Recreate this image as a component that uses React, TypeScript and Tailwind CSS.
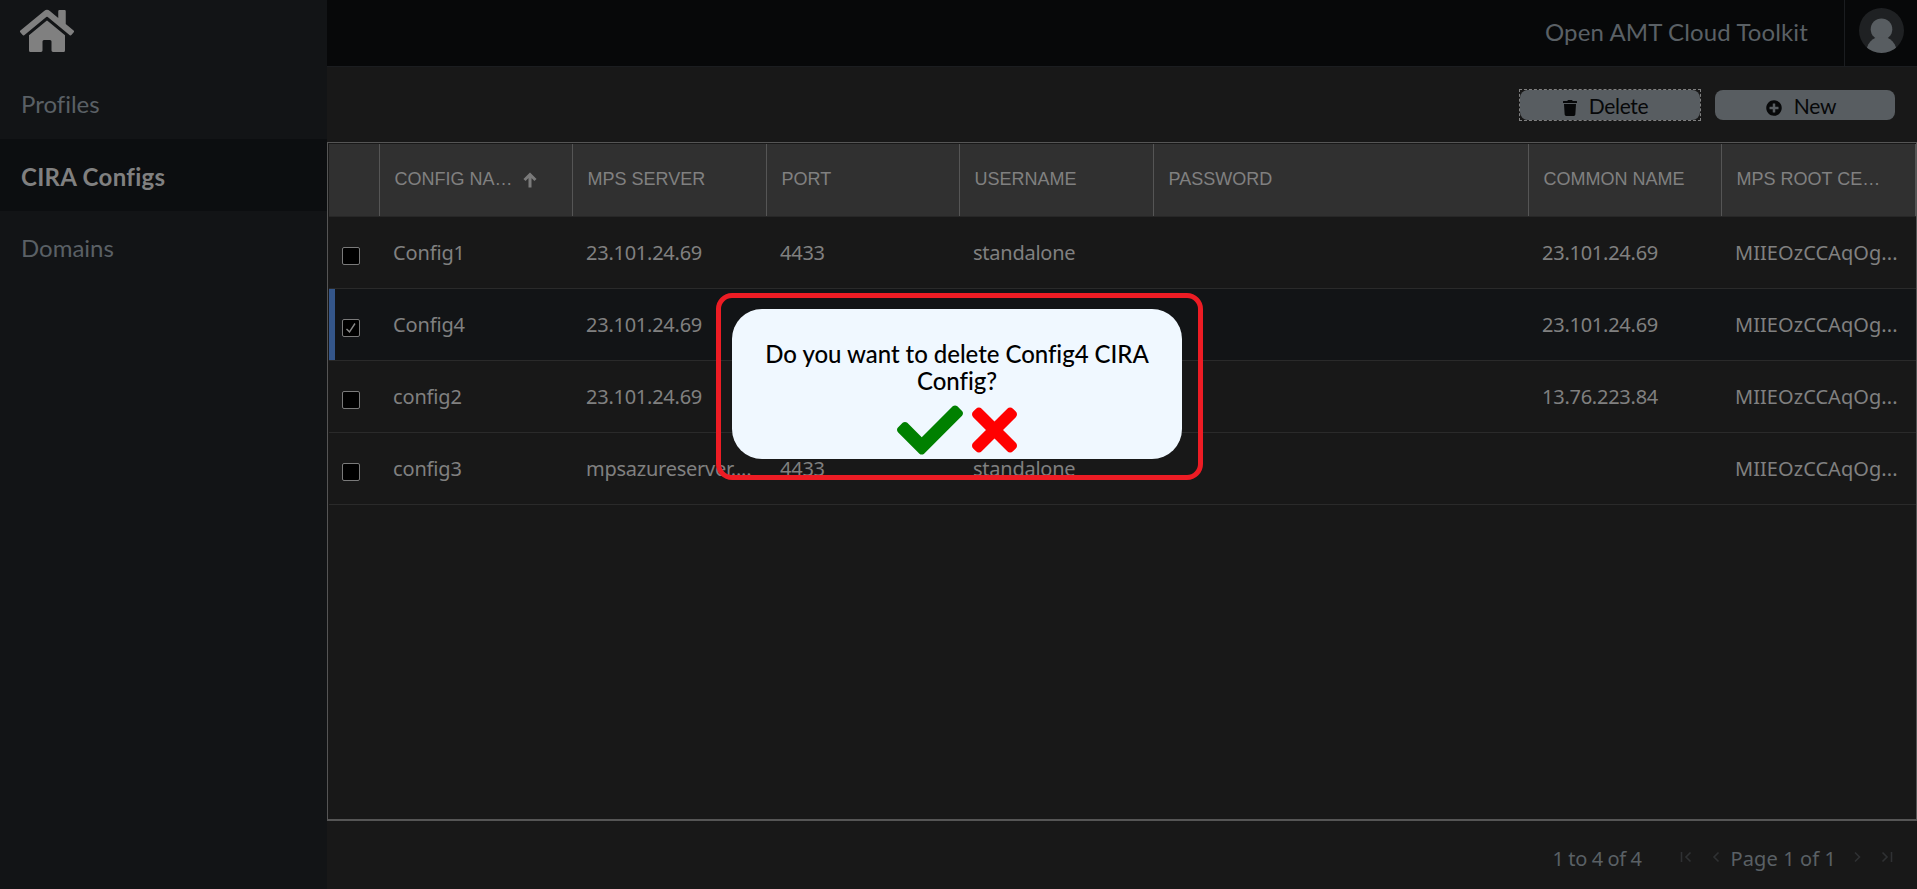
import React from "react";
import { FaCheck, FaHome, FaPlusCircle, FaTimes, FaTrash } from "react-icons/fa";

type Config = {
  name: string;
  server: string;
  port: string;
  username: string;
  commonName: string;
  cert: string;
  selected?: boolean;
};

const configs: Config[] = [
  { name: "Config1", server: "23.101.24.69", port: "4433", username: "standalone", commonName: "23.101.24.69", cert: "MIIEOzCCAqOg..." },
  { name: "Config4", server: "23.101.24.69", port: "", username: "", commonName: "23.101.24.69", cert: "MIIEOzCCAqOg...", selected: true },
  { name: "config2", server: "23.101.24.69", port: "", username: "", commonName: "13.76.223.84", cert: "MIIEOzCCAqOg..." },
  { name: "config3", server: "mpsazureserver....", port: "4433", username: "standalone", commonName: "", cert: "MIIEOzCCAqOg..." },
];

const columns = ["CONFIG NA…", "MPS SERVER", "PORT", "USERNAME", "PASSWORD", "COMMON NAME", "MPS ROOT CE…"];

const gridColumns = "grid grid-cols-[51px_193px_194px_193px_194px_375px_193px_194px]";

function NavItem({ label, active }: { label: string; active?: boolean }) {
  return (
    <a
      className={
        active
          ? "flex h-[72px] items-center bg-[#0c0e10] pt-[3px] pl-[21px] text-2xl font-bold tracking-[0.3px] text-[#808080]"
          : "flex h-[72px] items-center pt-px pl-[21px] text-2xl text-[#5a6065]"
      }
    >
      {label}
    </a>
  );
}

function Sidebar() {
  return (
    <aside className="flex w-[327px] shrink-0 flex-col bg-[#121416]">
      <div className="h-[67px] pt-[7px] pl-5">
        <FaHome className="h-12 w-[54px] text-[#808080]" />
      </div>
      <NavItem label="Profiles" />
      <NavItem label="CIRA Configs" active />
      <NavItem label="Domains" />
    </aside>
  );
}

function Avatar() {
  return (
    <svg viewBox="0 0 45 45" className="h-[45px] w-[45px]">
      <defs>
        <clipPath id="avatar-clip">
          <circle cx="22.5" cy="22.5" r="22.5" />
        </clipPath>
      </defs>
      <circle cx="22.5" cy="22.5" r="22.5" fill="#1f2123" />
      <g clipPath="url(#avatar-clip)" fill="#585d61">
        <circle cx="22.5" cy="21.2" r="10.8" />
        <path d="M17 29.5C12.5 31.5 9.5 35 8 39.5L8 46H37V39.5C35.500 35 32.500 31.500 28 29.500Z" />
      </g>
    </svg>
  );
}

function TopBar() {
  return (
    <header className="flex h-[67px] shrink-0 items-stretch border-b border-[#1b1d20] bg-[#070809]">
      <div className="ml-auto flex items-center pr-[36px] pb-[2px] text-2xl tracking-[0.13px] text-[#5a6065]">
        Open AMT Cloud Toolkit
      </div>
      <div className="flex w-[73px] justify-center border-l border-[#1b1d20] pt-2">
        <Avatar />
      </div>
    </header>
  );
}

function Toolbar() {
  return (
    <div className="flex h-[75px] shrink-0 justify-end gap-[15px] pt-[23px] pr-[22px]">
      <div className="h-[30px] w-[180px] outline-1 outline-dashed outline-[#808080]">
        <button className="flex h-full w-full items-center justify-center gap-3 rounded-lg bg-[#585d61] pr-[9px] text-[21px] tracking-[-0.3px] text-[#070809]">
          <FaTrash className="mt-[5px] h-4 w-[14px]" />
          <span className="pt-px">Delete</span>
        </button>
      </div>
      <button className="flex h-[30px] w-[180px] items-center justify-center gap-3 rounded-lg bg-[#585d61] pr-[8px] text-[21px] tracking-[-0.3px] text-[#070809]">
        <FaPlusCircle className="mt-[5px] h-4 w-4" />
        <span className="pt-px">New</span>
      </button>
    </div>
  );
}

function Checkbox({ checked }: { checked?: boolean }) {
  return (
    <span className="flex h-[18px] w-[18px] items-center justify-center rounded-[2px] border border-[#7a7a7a] bg-black">
      {checked && (
        <svg viewBox="0 0 12 12" className="h-3 w-3" fill="none" stroke="#8a8a8a" strokeWidth="1.4">
          <path d="M1.500 7L4.500 9.800L10 1.500" />
        </svg>
      )}
    </span>
  );
}

function SortArrow() {
  return (
    <svg viewBox="0 0 14 16" className="ml-[10px] h-4 w-[14px]" fill="none" stroke="#7a7a7a" strokeWidth="3">
      <path d="M7 15.500V2.500M1.500 8L7 2.500L12.500 8" />
    </svg>
  );
}

function HeaderRow() {
  return (
    <div className={`${gridColumns} h-[73px] shrink-0 border-b border-[#272727] bg-[#303030] font-['Liberation_Sans',sans-serif] text-lg text-[#808080]`}>
      <div className="h-[72px] border-r border-[#555]" />
      {columns.map((title, i) => (
        <div key={title} className="flex h-[72px] items-center border-r border-[#555] pb-[2px] pl-[14.500px] whitespace-nowrap">
          {title}
          {i === 0 && (
            <span className="pt-px">
              <SortArrow />
            </span>
          )}
        </div>
      ))}
    </div>
  );
}

function Row({ c }: { c: Config }) {
  return (
    <div
      className={`${gridColumns} h-[72px] shrink-0 items-center border-b border-[#2a2a2a] font-['Noto_Sans',sans-serif] text-xl tracking-[-0.25px] whitespace-nowrap text-[#808080] ${c.selected ? "bg-[#121416]" : ""}`}
    >
      <div className={c.selected ? "flex h-full items-center border-l-6 border-[#34568a] pt-[7px] pl-[7px]" : "flex h-full items-center pt-[7px] pl-[13px]"}>
        <Checkbox checked={c.selected} />
      </div>
      <div className="pl-[13px] tracking-[-0.15px]">{c.name}</div>
      <div className="pl-[13px]">{c.server}</div>
      <div className="pl-[13px]">{c.port}</div>
      <div className="pl-[13px]">{c.username}</div>
      <div />
      <div className="pl-[13px]">{c.commonName}</div>
      <div className="pl-[13px] tracking-[0.05px]">{c.cert}</div>
    </div>
  );
}

function Table() {
  return (
    <section className="flex h-[679px] shrink-0 flex-col border border-b-2 border-[#555] pt-px pl-px">
      <HeaderRow />
      {configs.map((c) => (
        <Row key={c.name} c={c} />
      ))}
    </section>
  );
}

function PageIcon({ d }: { d: string }) {
  return (
    <svg viewBox="0 0 12 12" className="mb-[4px] h-3 w-3" fill="none" stroke="#2f3133" strokeWidth="1.6">
      <path d={d} />
    </svg>
  );
}

function Pagination() {
  return (
    <footer className="flex flex-1 items-center justify-end pt-[7px] pr-[24px] font-['Noto_Sans',sans-serif] text-xl text-[#5a6065]">
      <span className="mr-[38px] tracking-[-0.4px]">1 to 4 of 4</span>
      <PageIcon d="M1.500 1V11M10.500 1.500L6 6L10.500 10.500" />
      <span className="w-5" />
      <PageIcon d="M6.500 1.500L2 6L6.500 10.500" />
      <span className="ml-[7px] mr-[15px] tracking-[0.1px]">Page 1 of 1</span>
      <PageIcon d="M4 1.500L8.500 6L4 10.500" />
      <span className="w-[18px]" />
      <PageIcon d="M1.500 1.500L6 6L1.500 10.500M10.500 1V11" />
    </footer>
  );
}

function ConfirmDialog() {
  return (
    <div className="absolute top-[293px] left-[716px] h-[187px] w-[487px]">
      <div className="absolute top-4 left-4 flex h-[150px] w-[450px] flex-col items-center rounded-[30px] bg-[#f0f8ff] pt-[31px]">
        <p className="w-[400px] text-center text-2xl leading-[27px] font-medium tracking-[-0.04px] text-black">
          Do you want to delete Config4 CIRA Config?
        </p>
        <div className="mt-[3px] flex gap-[9px]">
          <FaCheck className="h-[66px] w-[66px] text-[#008000]" />
          <FaTimes className="h-[66px] w-[45px] text-[#ff0000]" />
        </div>
      </div>
      <div className="absolute inset-0 rounded-[16px] border-5 border-[#ed1c24]" />
    </div>
  );
}

export default function App() {
  return (
    <div className="relative flex h-[889px] w-[1917px] overflow-hidden bg-[#181818] font-['Lato',sans-serif] [font-variant-ligatures:none]">
      <Sidebar />
      <main className="flex w-[1590px] flex-col">
        <TopBar />
        <Toolbar />
        <Table />
        <Pagination />
      </main>
      <ConfirmDialog />
    </div>
  );
}
